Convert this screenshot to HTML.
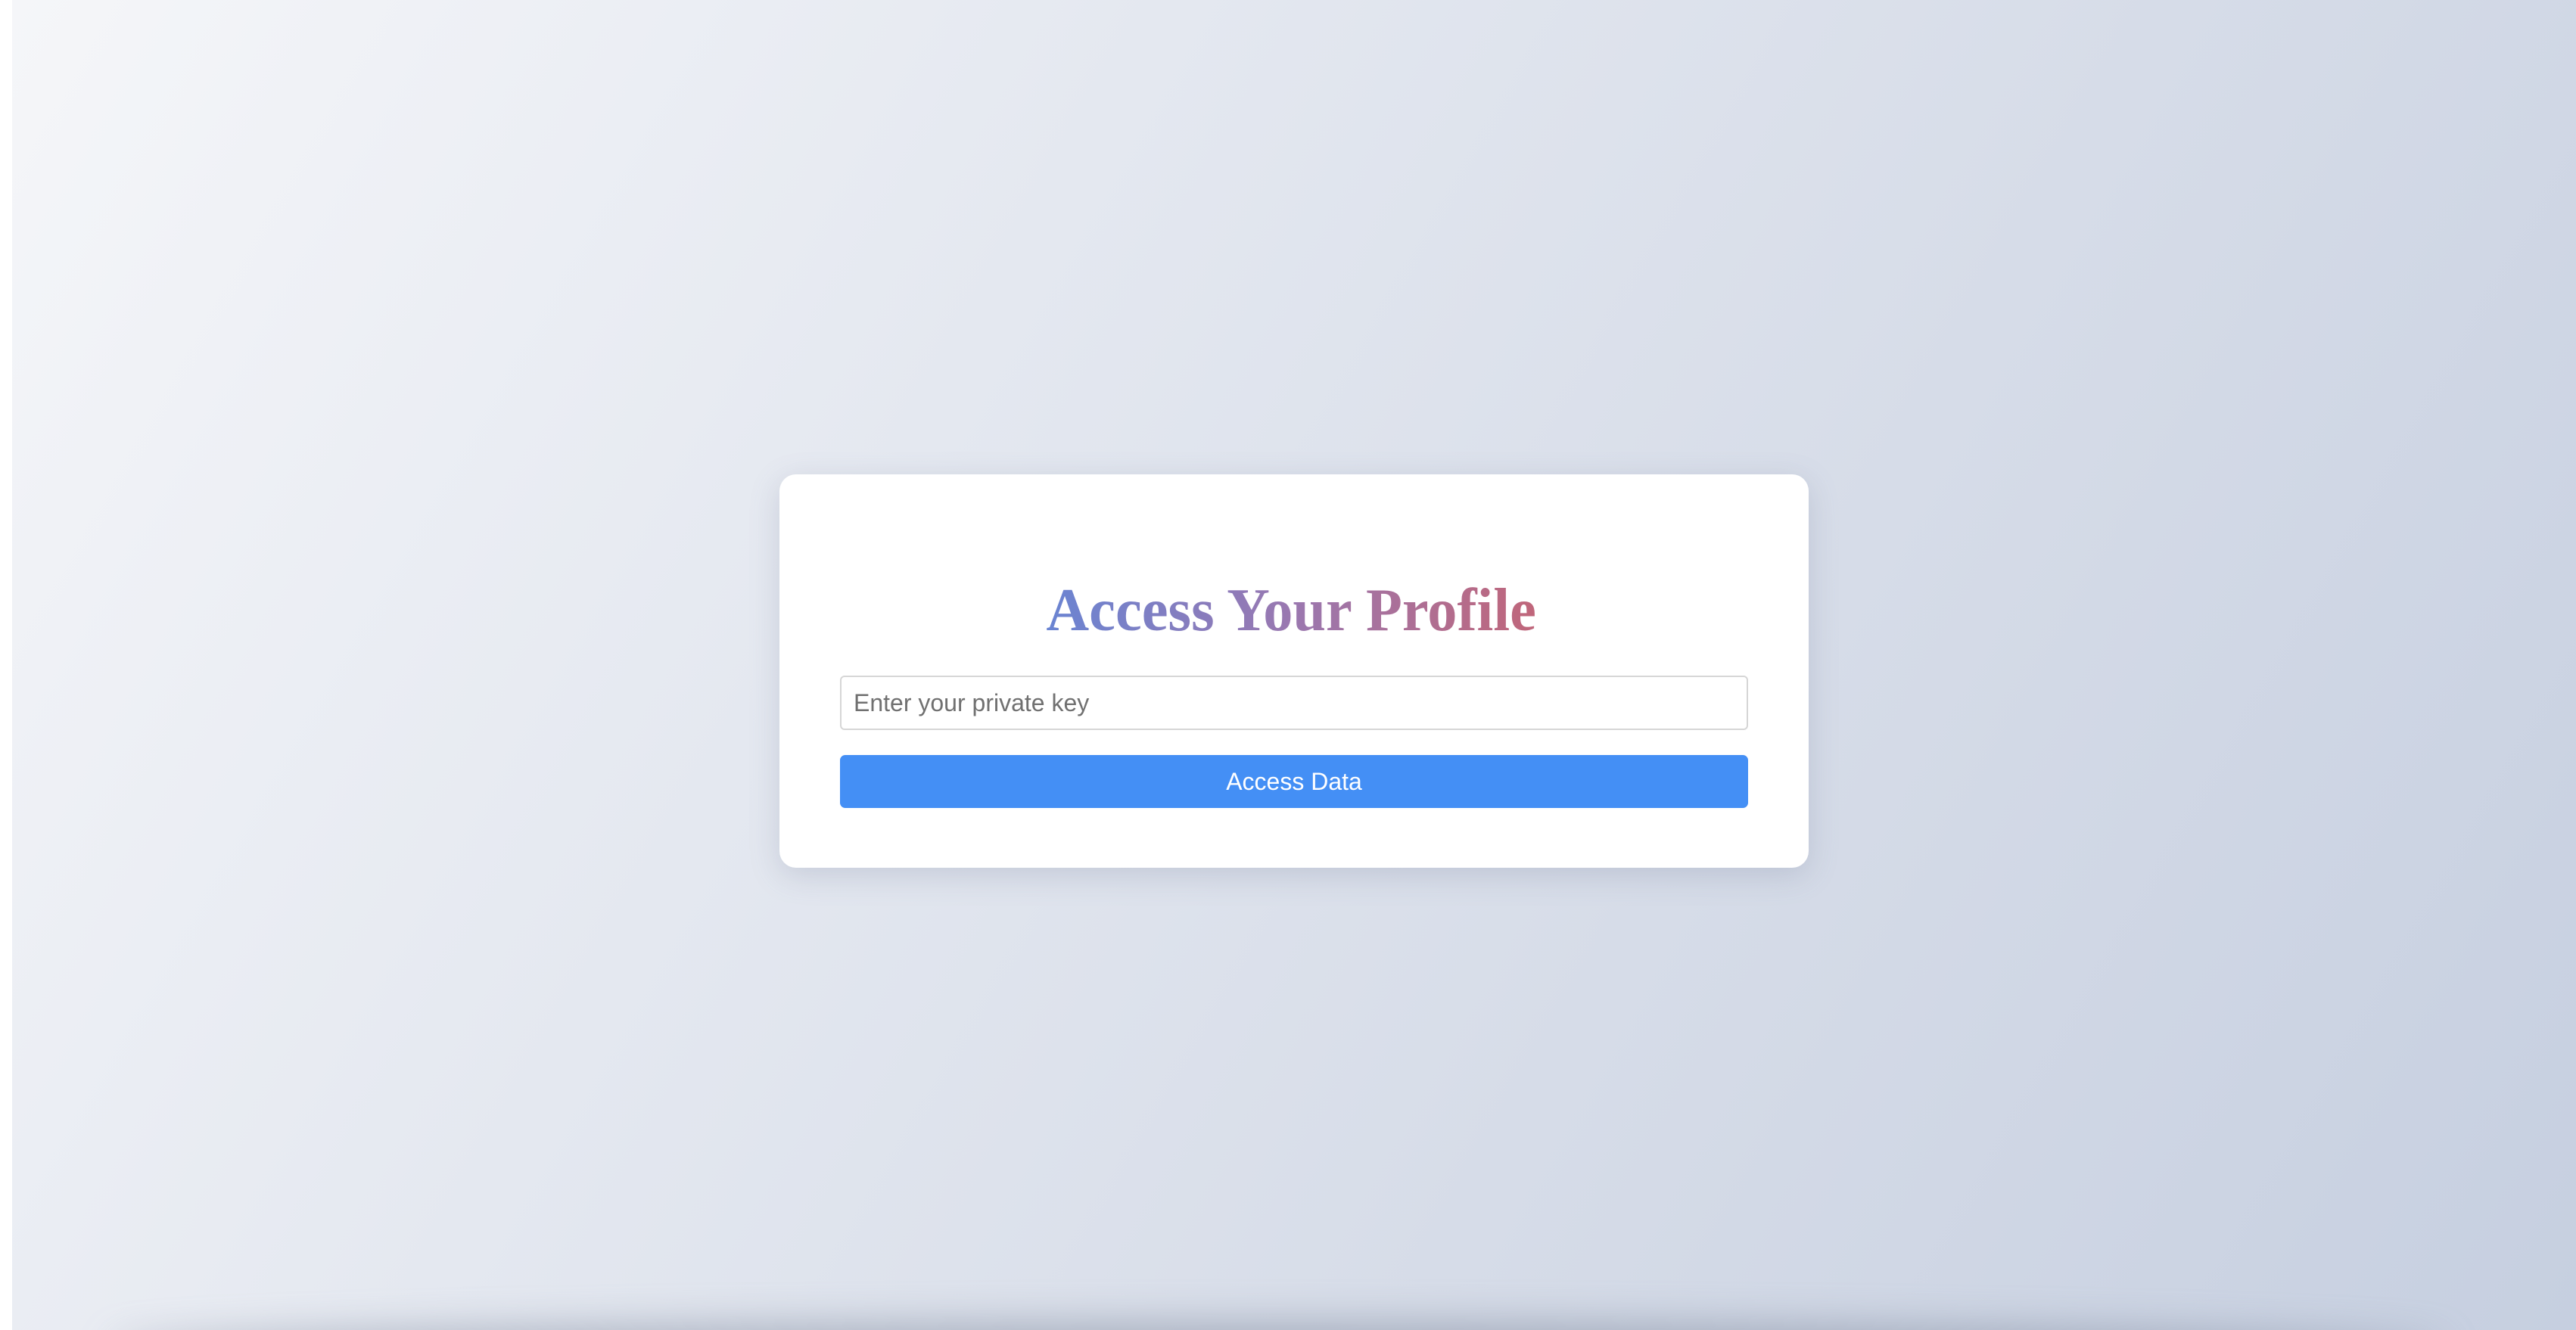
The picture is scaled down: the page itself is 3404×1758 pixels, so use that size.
<!DOCTYPE html>
<html><head><style>
html,body{margin:0;padding:0;width:3404px;height:1758px;overflow:hidden;background:#fff;}
.bg{position:absolute;left:16px;top:0;width:3388px;height:1758px;background:linear-gradient(120deg,#f5f6f9 0%,#e4e8f0 35%,#d6dce8 65%,#c6cfe0 100%);overflow:hidden;}
.shadow{position:absolute;left:130px;right:170px;bottom:-60px;height:70px;background:rgba(120,130,150,0.5);filter:blur(25px);border-radius:50%;}
.card{position:absolute;left:1030px;top:627px;width:1360px;height:520px;background:#fff;border-radius:22px;box-shadow:0 10px 40px rgba(100,110,140,0.22);}
h1{position:absolute;left:8px;right:0;top:767px;margin:0;text-align:center;font:bold 80px/1 "Liberation Serif",serif;transform:scaleX(0.98);transform-origin:1710px 0;}
h1 span{background:linear-gradient(90deg,#6a84d2,#9a78b0,#c0667a);-webkit-background-clip:text;background-clip:text;color:transparent;}
.input{position:absolute;left:1110px;top:893px;border:2px solid #d6d6d6;border-radius:6px;font:32px/68px "Liberation Sans",sans-serif;color:#707070;padding-left:16px;box-sizing:border-box;width:1200px;height:72px;}
.btn{position:absolute;left:1110px;top:998px;width:1200px;height:70px;background:#448ff5;border-radius:7px;color:#fff;text-align:center;font:32px/70px "Liberation Sans",sans-serif;}
</style></head><body>
<div class="bg"><div class="shadow"></div></div>
<div class="card"></div>
<h1><span>Access Your Profile</span></h1>
<div class="input">Enter your private key</div>
<div class="btn">Access Data</div>
</body></html>
